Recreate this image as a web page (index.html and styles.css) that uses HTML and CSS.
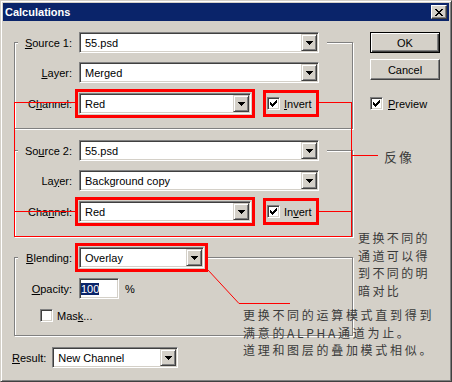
FILE: index.html
```html
<!DOCTYPE html>
<html lang="en">
<head>
  <meta charset="UTF-8" />
  <title>Calculations</title>
  <link rel="stylesheet" href="styles.css">
</head>
<body>
  <div class="window">
    <div class="titlebar">
      <span class="title">Calculations</span>
      <span class="close">
        <svg width="8" height="7" viewBox="0 0 8 7" shape-rendering="crispEdges"><path d="M0 0h2v1h-2zM6 0h2v1h-2zM1 1h2v1h-2zM5 1h2v1h-2zM2 2h4v1h-4zM3 3h2v1h-2zM2 4h4v1h-4zM1 5h2v1h-2zM5 5h2v1h-2zM0 6h2v1h-2zM6 6h2v1h-2z"/></svg>
      </span>
    </div>

    <div class="dialog">
      <div class="main">
        <!-- source 1 -->
        <div class="group g-first">
          <div class="row legend">
            <span class="label"><u>S</u>ource 1:</span>
            <div class="field w-wide">55.psd<span class="drop"><svg width="7" height="4" viewBox="0 0 7 4" shape-rendering="crispEdges"><path d="M0 0h7v1h-7zM1 1h5v1h-5zM2 2h3v1h-3zM3 3h1v1h-1z"/></svg></span></div>
          </div>
          <div class="row gap9">
            <span class="label"><u>L</u>ayer:</span>
            <div class="field w-wide">Merged<span class="drop"><svg width="7" height="4" viewBox="0 0 7 4" shape-rendering="crispEdges"><path d="M0 0h7v1h-7zM1 1h5v1h-5zM2 2h3v1h-3zM3 3h1v1h-1z"/></svg></span></div>
          </div>
          <div class="row gap10">
            <span class="label">C<u>h</u>annel:</span>
            <div class="field w-chan marked">Red<span class="drop"><svg width="7" height="4" viewBox="0 0 7 4" shape-rendering="crispEdges"><path d="M0 0h7v1h-7zM1 1h5v1h-5zM2 2h3v1h-3zM3 3h1v1h-1z"/></svg></span></div>
            <div class="invert">
              <span class="check"><svg width="7" height="7" viewBox="0 0 7 7" shape-rendering="crispEdges"><path d="M6 0h1v1h-1zM5 1h2v1h-2zM0 2h1v1h-1zM4 2h3v1h-3zM0 3h2v1h-2zM3 3h3v1h-3zM0 4h5v1h-5zM1 5h3v1h-3zM2 6h1v1h-1z"/></svg></span>
              <span><u>I</u>nvert</span>
            </div>
          </div>
        </div>

        <!-- source 2 -->
        <div class="group g-second">
          <div class="row legend">
            <span class="label">So<u>u</u>rce 2:</span>
            <div class="field w-wide">55.psd<span class="drop"><svg width="7" height="4" viewBox="0 0 7 4" shape-rendering="crispEdges"><path d="M0 0h7v1h-7zM1 1h5v1h-5zM2 2h3v1h-3zM3 3h1v1h-1z"/></svg></span></div>
          </div>
          <div class="row gap9">
            <span class="label">La<u>y</u>er:</span>
            <div class="field w-wide">Background copy<span class="drop"><svg width="7" height="4" viewBox="0 0 7 4" shape-rendering="crispEdges"><path d="M0 0h7v1h-7zM1 1h5v1h-5zM2 2h3v1h-3zM3 3h1v1h-1z"/></svg></span></div>
          </div>
          <div class="row gap10">
            <span class="label">Cha<u>n</u>nel:</span>
            <div class="field w-chan marked">Red<span class="drop"><svg width="7" height="4" viewBox="0 0 7 4" shape-rendering="crispEdges"><path d="M0 0h7v1h-7zM1 1h5v1h-5zM2 2h3v1h-3zM3 3h1v1h-1z"/></svg></span></div>
            <div class="invert">
              <span class="check"><svg width="7" height="7" viewBox="0 0 7 7" shape-rendering="crispEdges"><path d="M6 0h1v1h-1zM5 1h2v1h-2zM0 2h1v1h-1zM4 2h3v1h-3zM0 3h2v1h-2zM3 3h3v1h-3zM0 4h5v1h-5zM1 5h3v1h-3zM2 6h1v1h-1z"/></svg></span>
              <span>In<u>v</u>ert</span>
            </div>
          </div>
        </div>

        <!-- blending -->
        <div class="group g-blend">
          <div class="row legend short">
            <span class="label"><u>B</u>lending:</span>
            <div class="field w-blend marked">Overlay<span class="drop"><svg width="7" height="4" viewBox="0 0 7 4" shape-rendering="crispEdges"><path d="M0 0h7v1h-7zM1 1h5v1h-5zM2 2h3v1h-3zM3 3h1v1h-1z"/></svg></span></div>
          </div>
          <div class="row gap10">
            <span class="label"><u>O</u>pacity:</span>
            <div class="field input"><span class="sel">100</span></div>
            <span class="pct">%</span>
          </div>
          <div class="row mask">
            <span class="check"></span>
            <span>Mas<u>k</u>...</span>
          </div>
        </div>

        <div class="row result">
          <span><u>R</u>esult:</span>
          <div class="field w-result">New Channel<span class="drop"><svg width="7" height="4" viewBox="0 0 7 4" shape-rendering="crispEdges"><path d="M0 0h7v1h-7zM1 1h5v1h-5zM2 2h3v1h-3zM3 3h1v1h-1z"/></svg></span></div>
        </div>
      </div>

      <div class="side">
        <div class="btn default">OK</div>
        <div class="btn">Cancel</div>
        <div class="preview">
          <span class="check"><svg width="7" height="7" viewBox="0 0 7 7" shape-rendering="crispEdges"><path d="M6 0h1v1h-1zM5 1h2v1h-2zM0 2h1v1h-1zM4 2h3v1h-3zM0 3h2v1h-2zM3 3h3v1h-3zM0 4h5v1h-5zM1 5h3v1h-3zM2 6h1v1h-1z"/></svg></span>
          <span><u>P</u>review</span>
        </div>
      </div>
    </div>

    <!-- red annotation lines drawn over the dialog -->
    <svg class="marks" width="452" height="382" viewBox="0 0 452 382">
      <path d="M14 102.5H76M14.5 102V237M14 211.5H76M14 236.5H352M351.5 102V237M318 102.5H352M318 211.5H352M352 155.5H378M239 303.5H290" stroke="#f00" stroke-width="1" fill="none" shape-rendering="crispEdges"/>
      <path d="M208 270L239 303.5" stroke="#f00" stroke-width="1" fill="none"/>
    </svg>

    <div class="note note-invert">反像</div>
    <div class="note note-channel">更换不同的<br>通道可以得<br>到不同的明<br>暗对比</div>
    <div class="note note-blend">更换不同的运算模式直到得到<br>满意的ALPHA通道为止。<br>道理和图层的叠加模式相似。</div>
  </div>
</body>
</html>
```

FILE: styles.css
```css
* {
  box-sizing: border-box;
}

body {
  margin: 0;
  background: #d4d0c8;
  font-family: "Liberation Sans", Arial, sans-serif;
  font-size: 11px;
  color: #000;
}

u {
  text-decoration: underline;
  text-underline-offset: 1px;
}

.window {
  position: relative;
  width: 452px;
  height: 382px;
  background: #d4d0c8;
  border: 1px solid;
  border-color: #d4d0c8 #404040 #404040 #d4d0c8;
  box-shadow: inset 1px 1px #fff, inset -1px -1px #808080;
  padding: 2px;
}

.titlebar {
  height: 18px;
  background: #0a246a;
  color: #fff;
  font-weight: bold;
  display: flex;
  align-items: center;
  padding-left: 2px;
}

.close {
  margin-left: auto;
  margin-right: 2px;
  width: 16px;
  height: 14px;
  background: #d4d0c8;
  border: 1px solid;
  border-color: #fff #404040 #404040 #fff;
  box-shadow: inset -1px -1px #808080;
  display: flex;
  align-items: center;
  justify-content: center;
}

.dialog {
  display: flex;
}

.main {
  width: 367px;
}

/* etched group boxes */
.group {
  margin-left: 11px;
  width: 339px;
  border: 1px solid #808080;
  box-shadow: inset 1px 1px #fff, 1px 1px #fff;
}

.g-first {
  margin-top: 21px;
  height: 87px;
}

.g-second {
  margin-top: 21px;
  height: 87px;
}

.g-blend {
  margin-top: 20px;
  height: 79px;
}

.row {
  display: flex;
  align-items: center;
  height: 21px;
  margin-left: 3px;
}

.legend {
  margin-top: -11px;
  width: 309px;
  background: #d4d0c8;
}

.legend.short {
  width: 189px;
}

.gap9 {
  margin-top: 9px;
}

.gap10 {
  margin-top: 10px;
}

.label {
  width: 58px;
  text-align: right;
  padding-right: 4px;
  white-space: nowrap;
}

.field {
  height: 21px;
  margin-left: 3px;
  background: #fff;
  border: 1px solid;
  border-color: #808080 #fff #fff #808080;
  box-shadow: inset 1px 1px #404040, inset -1px -1px #d4d0c8;
  display: flex;
  align-items: center;
  padding: 1px 1px 1px 5px;
  white-space: nowrap;
}

.w-wide { width: 240px; }
.w-chan { width: 172px; }
.w-blend { width: 125px; }
.w-result { width: 126px; }

.marked {
  outline: 3px solid #f00;
  outline-offset: 1px;
}

.drop {
  margin-left: auto;
  width: 16px;
  height: 17px;
  flex: none;
  background: #d4d0c8;
  border: 1px solid;
  border-color: #d4d0c8 #404040 #404040 #d4d0c8;
  box-shadow: inset 1px 1px #fff, inset -1px -1px #808080;
  display: flex;
  align-items: center;
  justify-content: center;
}

.check {
  width: 13px;
  height: 13px;
  flex: none;
  background: #fff;
  border: 1px solid;
  border-color: #808080 #fff #fff #808080;
  box-shadow: inset 1px 1px #404040, inset -1px -1px #d4d0c8;
  display: flex;
  align-items: center;
  justify-content: center;
}

.invert {
  margin-left: 15px;
  width: 50px;
  height: 21px;
  padding-left: 1px;
  display: flex;
  align-items: center;
  gap: 4px;
  outline: 3px solid #f00;
}

.input {
  width: 40px;
  padding-left: 1px;
}

.sel {
  background: #0a246a;
  color: #fff;
}

.pct {
  margin-left: 6px;
}

.mask {
  margin-top: 10px;
  height: 13px;
  padding-left: 22px;
  gap: 4px;
}

.result {
  margin-top: 11px;
  margin-left: 9px;
}

.result .field {
  margin-left: 6px;
}

.side {
  width: 70px;
  padding-top: 11px;
}

.btn {
  height: 21px;
  background: #d4d0c8;
  border: 1px solid;
  border-color: #fff #404040 #404040 #fff;
  box-shadow: inset -1px -1px #808080;
  display: flex;
  align-items: center;
  justify-content: center;
  margin-bottom: 6px;
}

.btn.default {
  border-color: #000;
  box-shadow: inset 1px 1px #fff, inset -1px -1px #404040, inset -2px -2px #808080;
}

.preview {
  margin-top: 17px;
  display: flex;
  align-items: center;
  gap: 5px;
  height: 13px;
}

/* annotations */
.marks {
  position: absolute;
  left: -1px;
  top: -1px;
}

.note {
  position: absolute;
  font-family: "Noto Sans CJK SC", sans-serif;
  font-size: 12px;
  line-height: 17.5px;
  letter-spacing: 2.7px;
  color: #3a3a3a;
  white-space: nowrap;
}

.note-invert {
  left: 383px;
  top: 147px;
  font-size: 13px;
  letter-spacing: 2px;
}

.note-channel {
  left: 357px;
  top: 228px;
  letter-spacing: 2.4px;
}

.note-blend {
  left: 242px;
  top: 305px;
}
```
